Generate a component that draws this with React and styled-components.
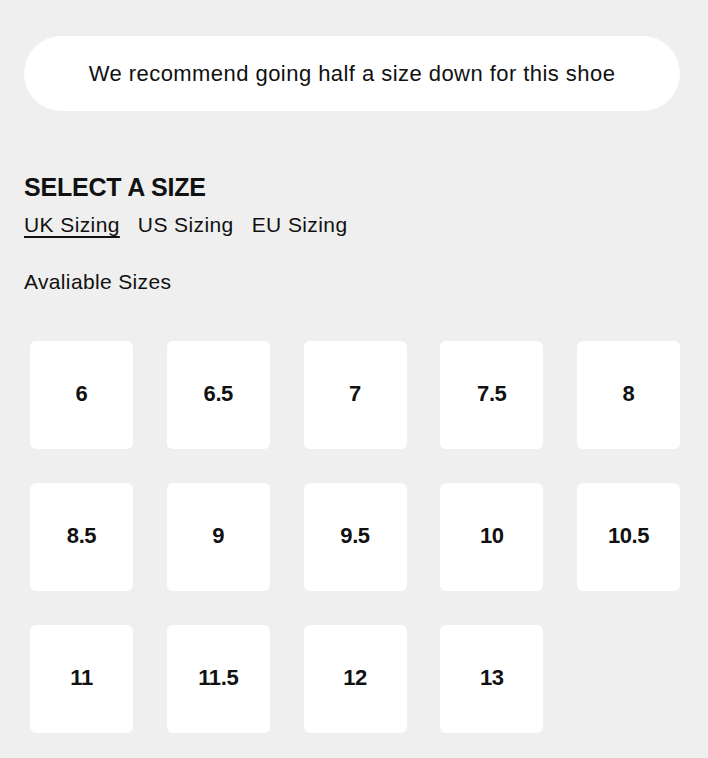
import React, { useState } from 'react'
import styled, { createGlobalStyle } from 'styled-components';

const GlobalStyle = createGlobalStyle`
  html, body {
    margin: 0;
    padding: 0;
    background: #efefef;
  }
  body {
    font-family: "Liberation Sans", Arial, sans-serif;
    color: #111111;
  }
`;

const Page = styled.div`
  padding: 36px 28px 0 24px;
`;

const Banner = styled.div`
  height: 75px;
  border-radius: 38px;
  background: #ffffff;
  display: flex;
  align-items: center;
  justify-content: center;
  font-size: 22px;
  letter-spacing: 0.45px;
  color: #111111;
`;

const Heading = styled.h2`
  margin: 61px 0 0;
  font-size: 25px;
  font-weight: 700;
  letter-spacing: -0.2px;
  line-height: 30px;
`;

const Tabs = styled.div`
  display: flex;
  gap: 18px;
  margin-top: 9px;
`;

const Tab = styled.button`
  border: none;
  background: none;
  padding: 0;
  font-family: inherit;
  font-size: 21px;
  letter-spacing: 0.4px;
  line-height: 28px;
  color: #111111;
  cursor: pointer;
  text-decoration: ${p => (p.$active ? 'underline' : 'none')};
  text-decoration-thickness: 2px;
  text-underline-offset: 4px;
`;

const Label = styled.div`
  margin-top: 29px;
  font-size: 21px;
  letter-spacing: 0.35px;
  line-height: 28px;
`;

const Grid = styled.div`
  margin-top: 45px;
  padding-left: 6px;
  display: grid;
  grid-template-columns: repeat(5, 103px);
  justify-content: space-between;
  row-gap: 34px;
`;

const SizeBox = styled.button`
  height: 108px;
  border: none;
  border-radius: 6px;
  background: #ffffff;
  display: flex;
  align-items: center;
  justify-content: center;
  padding: 0 0 2px;
  font-family: inherit;
  font-size: 22px;
  font-weight: 700;
  letter-spacing: -0.4px;
  color: #111111;
  cursor: pointer;
`;

const sizes = ['6', '6.5', '7', '7.5', '8', '8.5', '9', '9.5', '10', '10.5', '11', '11.5', '12', '13'];

const App = () => {
  const [tab, setTab] = useState('UK');
  return (
    <Page>
      <GlobalStyle />
      <Banner>We recommend going half a size down for this shoe</Banner>
      <Heading>SELECT A SIZE</Heading>
      <Tabs>
        {['UK', 'US', 'EU'].map(t => (
          <Tab key={t} $active={tab === t} onClick={() => setTab(t)}>{t} Sizing</Tab>
        ))}
      </Tabs>
      <Label>Avaliable Sizes</Label>
      <Grid>
        {sizes.map(s => (
          <SizeBox key={s}>{s}</SizeBox>
        ))}
      </Grid>
    </Page>
  )
}

export default App
